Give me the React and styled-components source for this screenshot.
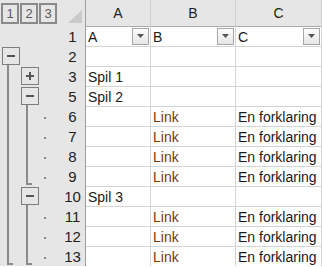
import React from "react";
import styled, {createGlobalStyle, css} from "styled-components";

const GlobalStyle = createGlobalStyle`
    body {
        margin: 0;
        background: #ffffff;
        font-family: "Liberation Sans", Arial, sans-serif;
    }
`;

const Sheet = styled.div`
    width: 322px;
    display: flex;
    flex-direction: column;
    font-size: 14px;
    color: #1a1a1a;
`;

const Row = styled.div`
    display: grid;
    grid-template-columns: 60px 26px 65px 85px 86px;
    height: ${props => props.header ? 26 : 20}px;
`;

const Gutter = styled.div`
    display: flex;
    padding-left: 1px;
    background: #e6e6e6;
    ${props => props.header && css`
        gap: 1px;
        padding-top: 3px;
        align-items: flex-start;
    `}
`;

const LevelButton = styled.div`
    width: 18px;
    height: 21px;
    box-sizing: border-box;
    border: 2px solid #8a8a8a;
    display: flex;
    align-items: center;
    justify-content: center;
    color: #5a5a5a;
    font-size: 13px;
`;

const Slot = styled.div`
    width: 19px;
    display: flex;
    flex-direction: column;
`;

const OutlineBox = styled.div`
    width: 18px;
    height: 18px;
    box-sizing: border-box;
    margin: 1px 0 0 1px;
    border: 1px solid #7d7d7d;
    display: flex;
    align-items: center;
    justify-content: center;
`;

const Line = styled.div`
    margin-left: 6px;
    width: 6px;
    box-sizing: border-box;
    height: ${props => props.foot ? 19 : props.tail ? 1 : 20}px;
    border-left: 2px solid #8a8a8a;
    ${props => props.foot && css`
        border-bottom: 2px solid #8a8a8a;
    `}
`;

const Dot = styled.div`
    width: 2px;
    height: 2px;
    margin: 11px 0 0 5px;
    background: #8a8a8a;
`;

const Corner = styled.div`
    background: #e6e6e6;
    border-right: 1px solid #9e9e9e;
    border-bottom: 1px solid #ababab;
    display: flex;
    align-items: flex-end;
    justify-content: flex-end;
    padding: 0 3px 3px 0;
`;

const CornerMark = styled.div`
    width: 14px;
    height: 13px;
    background: #cacaca;
    clip-path: polygon(100% 0, 100% 100%, 0 100%);
`;

const ColHead = styled.div`
    background: #e6e6e6;
    border-right: 1px solid #d0d0d0;
    border-bottom: 1px solid #ababab;
    text-align: center;
    line-height: 25px;
    padding-top: 1px;
    color: #222222;
`;

const RowHead = styled.div`
    background: #e6e6e6;
    border-right: 1px solid #9e9e9e;
    border-bottom: 1px solid #d0d0d0;
    text-align: center;
    font-size: 15px;
    line-height: 19px;
    padding-top: 1px;
    color: #222222;
`;

const Cell = styled.div`
    display: flex;
    align-items: center;
    justify-content: space-between;
    border-right: 1px solid #d4d4d4;
    border-bottom: 1px solid #d4d4d4;
    padding-left: 2px;
    padding-top: 1px;
    white-space: nowrap;
    overflow: hidden;
    color: ${props => props.link ? "#7a3a0c" : "#1a1a1a"};
`;

const FilterButton = styled.div`
    width: 17px;
    height: 17px;
    box-sizing: border-box;
    margin: 0 1px 1px 0;
    border: 1px solid #a6a6a6;
    background: linear-gradient(#fdfdfd, #e6e6e6);
    display: flex;
    align-items: center;
    justify-content: center;
`;

const Minus = () => (
    <svg width="8" height="8" viewBox="0 0 8 8">
        <rect x="0" y="3" width="8" height="2" fill="#555" />
    </svg>
);

const Plus = () => (
    <svg width="8" height="8" viewBox="0 0 8 8">
        <rect x="0" y="3" width="8" height="2" fill="#555" />
        <rect x="3" y="0" width="2" height="8" fill="#555" />
    </svg>
);

const Arrow = () => (
    <svg width="7" height="4" viewBox="0 0 7 4">
        <polygon points="0,0 7,0 3.5,4" fill="#555" />
    </svg>
);

const rows = [
    {n: 1, a: "A", b: "B", c: "C", filter: true, gutter: [null, null, null]},
    {n: 2, gutter: ["minus", null, null]},
    {n: 3, a: "Spil 1", gutter: ["line", "plus", null]},
    {n: 5, a: "Spil 2", gutter: ["line", "minus", null]},
    {n: 6, b: "Link", c: "En forklaring", gutter: ["line", "line", "dot"]},
    {n: 7, b: "Link", c: "En forklaring", gutter: ["line", "line", "dot"]},
    {n: 8, b: "Link", c: "En forklaring", gutter: ["line", "line", "dot"]},
    {n: 9, b: "Link", c: "En forklaring", gutter: ["line", "foot", "dot"]},
    {n: 10, a: "Spil 3", gutter: ["line", "minus", null]},
    {n: 11, b: "Link", c: "En forklaring", gutter: ["line", "line", "dot"]},
    {n: 12, b: "Link", c: "En forklaring", gutter: ["line", "line", "dot"]},
    {n: 13, b: "Link", c: "En forklaring", gutter: ["foot", "foot", "dot"]},
];

const OutlineSlot = ({kind}) => {
    if (kind === "minus") {
        return (
            <Slot>
                <OutlineBox><Minus /></OutlineBox>
                <Line tail />
            </Slot>
        );
    }
    if (kind === "plus") {
        return <Slot><OutlineBox><Plus /></OutlineBox></Slot>;
    }
    if (kind === "line") return <Slot><Line /></Slot>;
    if (kind === "foot") return <Slot><Line foot /></Slot>;
    if (kind === "dot") return <Slot><Dot /></Slot>;
    return <Slot />;
};

const DataCell = ({text, filter, link}) => (
    <Cell link={link}>
        <span>{text}</span>
        {filter && <FilterButton><Arrow /></FilterButton>}
    </Cell>
);

export default function App() {
    return (
        <>
            <GlobalStyle />
            <Sheet>
                <Row header>
                    <Gutter header>
                        <LevelButton>1</LevelButton>
                        <LevelButton>2</LevelButton>
                        <LevelButton>3</LevelButton>
                    </Gutter>
                    <Corner><CornerMark /></Corner>
                    <ColHead>A</ColHead>
                    <ColHead>B</ColHead>
                    <ColHead>C</ColHead>
                </Row>
                {rows.map(row => (
                    <Row key={row.n}>
                        <Gutter>
                            {row.gutter.map((kind, i) => <OutlineSlot key={i} kind={kind} />)}
                        </Gutter>
                        <RowHead>{row.n}</RowHead>
                        <DataCell text={row.a} filter={row.filter} />
                        <DataCell text={row.b} filter={row.filter} link={row.b === "Link"} />
                        <DataCell text={row.c} filter={row.filter} />
                    </Row>
                ))}
            </Sheet>
        </>
    );
}
